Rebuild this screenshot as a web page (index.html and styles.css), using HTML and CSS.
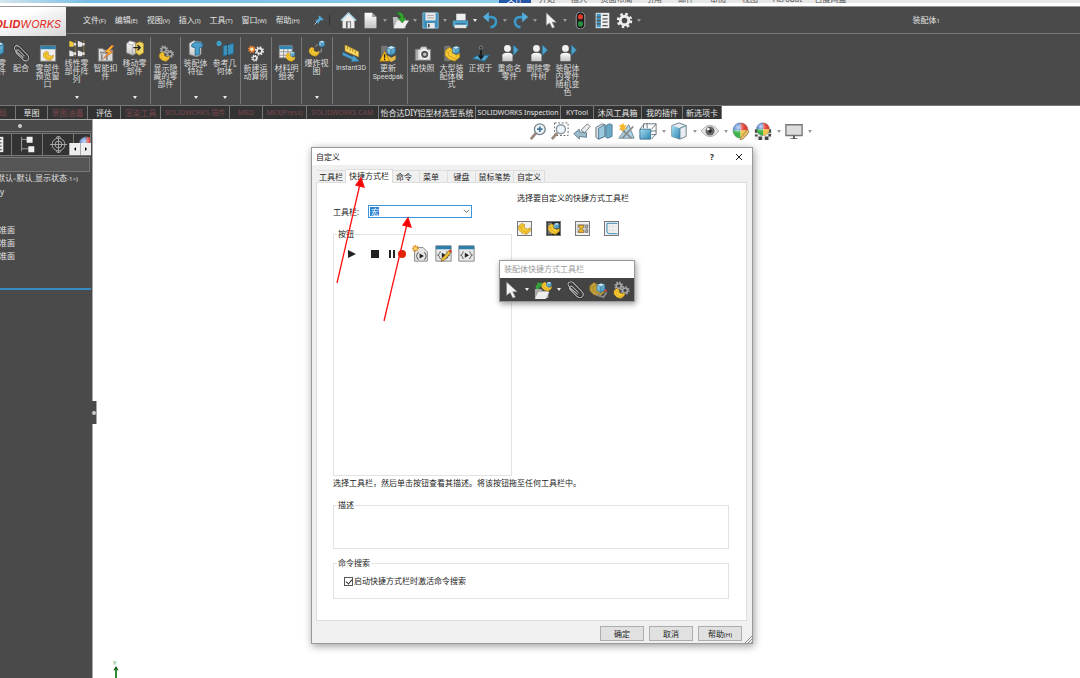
FILE: index.html
```html
<!DOCTYPE html>
<html lang="zh-CN">
<head>
<meta charset="utf-8">
<title>装配体1</title>
<link rel="stylesheet" href="styles.css">
</head>
<body>
<svg class="defs" aria-hidden="true">
  <defs>
    <linearGradient id="gBlue" x1="0" y1="0" x2="1" y2="1"><stop offset="0" stop-color="#a5dcf2"/><stop offset="1" stop-color="#2e86b4"/></linearGradient>
    <linearGradient id="gGray" x1="0" y1="0" x2="0" y2="1"><stop offset="0" stop-color="#ffffff"/><stop offset="1" stop-color="#c4c4c4"/></linearGradient>
    <radialGradient id="gShine" cx=".35" cy=".3" r=".8"><stop offset="0" stop-color="#fff" stop-opacity=".75"/><stop offset=".5" stop-color="#fff" stop-opacity="0"/></radialGradient>
  </defs>
  <symbol id="part" viewBox="0 0 20 20"><path d="M1 6l5-4 4 2v5l5 2 4-2v5l-6 5-7-2-5-5z" fill="#f8ca34" stroke="#a87c14" stroke-width=".8"/><path d="M1 6l4 2 5-4M5 8v4l8 4 6-6M13 16v3" fill="none" stroke="#c0901c" stroke-width=".8"/></symbol>
  <symbol id="cube" viewBox="0 0 20 20"><path d="M3 5l8-3 7 3v10l-8 4-7-4z" fill="url(#gBlue)" stroke="#235e80"/><path d="M3 5l8-3 7 3-8 3z" fill="#c3e9f8"/><path d="M3 5l7 3 8-3M10 8v11" fill="none" stroke="#235e80"/></symbol>
  <symbol id="clip" viewBox="0 0 20 20"><g fill="none"><path d="M13 15L4 7C0 3 4-1 8 2l9 9c5 5 0 10-5 6L5 10C2 7 5 4 8 7l6 6" stroke="#222" stroke-width="2.600"/><path d="M13 15L4 7C0 3 4-1 8 2l9 9c5 5 0 10-5 6L5 10C2 7 5 4 8 7l6 6" stroke="#b4b4b4" stroke-width="1.300"/></g></symbol>
  <symbol id="cursor" viewBox="0 0 20 20"><path d="M5 1v15l4-3 3 6 3-1-3-6h5z" fill="#f2f2f2" stroke="#777" stroke-width=".6"/></symbol>
  <symbol id="gear" viewBox="0 0 20 20"><circle cx="10" cy="10" r="7.600" fill="none" stroke="currentColor" stroke-width="3" stroke-dasharray="3 2.970"/><circle cx="10" cy="10" r="5" fill="none" stroke="currentColor" stroke-width="3.400"/></symbol>
  <symbol id="window-part" viewBox="0 0 20 20"><path d="M1 1h18v18H1z" fill="#eee" stroke="#888"/><path d="M1 1h18v4H1z" fill="#3480ab"/><use href="#part" x="4" y="6" width="13" height="13"/></symbol>
  <symbol id="pattern" viewBox="0 0 20 20"><path d="M8 0v20M18 0v20" stroke="#8b7c43"/><path d="M1 1l5 2v5H1z" fill="#f4ca39"/><path d="M11 1l5 2v5h-5zM1 12l5 2v5H1zM11 12l5 2v5h-5z" fill="#e8e8e8"/><path d="M6 5h3M16 5h3M6 16h3M16 16h3" stroke="#ddd" stroke-width="3"/></symbol>
  <symbol id="fastener" viewBox="0 0 20 20"><path d="M1 4h5l2 2h10v13H1z" fill="#d8d8d8" stroke="#777"/><path d="M3 9h13M5 11v7M11 10v8" stroke="#888" stroke-width="2"/><path d="M17 0L9 8l4 1-6 7L18 8l-4-1 5-6z" fill="#ffc338" stroke="#cf642b"/></symbol>
  <symbol id="move" viewBox="0 0 20 20"><path d="M0 4l4-3 7 2v13l-4 2-7-3z" fill="url(#gGray)" stroke="#888"/><path d="M0 4l7 2 4-3M7 6v12" fill="none" stroke="#999" stroke-width=".7"/><path d="M11 4l5-2 4 2v11l-5 3-4-3z" fill="#efd564" stroke="#aa8425"/><path d="M8 9h8m-3-3l3 3-3 3" fill="none" stroke="#222" stroke-width="1.600"/></symbol>
  <symbol id="gearsgray" viewBox="0 0 20 20"><g color="#a5a5a5"><use href="#gear" x="2" y="0" width="11" height="11"/><use href="#gear" x="9" y="5" width="11" height="11"/></g><use href="#part" x="1" y="7" width="14" height="13"/></symbol>
  <symbol id="asmfeat" viewBox="0 0 20 20"><path d="M2 4l5-3 9 1v15l-5 3-9-3z" fill="url(#gGray)" stroke="#777"/><path d="M5 5l5-3 8 2v4l-4 1v8l-5 1V9L5 8z" fill="#4b9fca" stroke="#1e678e"/></symbol>
  <symbol id="refgeo" viewBox="0 0 20 20"><circle cx="3" cy="4" r="3" fill="#3e9dc7"/><path d="M8 7l12-3v12L8 19z" fill="#3a91bc" stroke="#206a91"/><path d="M13 4v16" stroke="#333" stroke-dasharray="3 1"/></symbol>
  <symbol id="motion" viewBox="0 0 20 20"><g color="#f08331"><use href="#gear" width="10" height="10"/></g><circle cx="5" cy="5" r="2" fill="#ffe9b2"/><g color="#e8e8e8"><use href="#gear" x="8" y="1" width="12" height="12"/><use href="#gear" x="4" y="11" width="9" height="9"/></g></symbol>
  <symbol id="bom" viewBox="0 0 20 20"><path d="M1 1h15v14H1z" fill="#f1f1f1" stroke="#999"/><path d="M1 1h15v4H1z" fill="#3288b5"/><path d="M1 8h15M1 12h15M6 5v10M11 5v10" stroke="#888"/><use href="#part" x="8" y="8" width="12" height="12"/><use href="#cube" x="13" y="7" width="7" height="8"/></symbol>
  <symbol id="explode" viewBox="0 0 20 20"><use href="#part" x="0" y="7" width="13" height="13"/><use href="#cube" x="11" y="0" width="9" height="9"/><path d="M8 8l3-3M15 10v4h-3" stroke="#aaa" fill="none"/></symbol>
  <symbol id="instant" viewBox="0 0 20 20"><path d="M3 0l16 8v6L3 7z" fill="#ffdb61" stroke="#c39420" stroke-width=".7"/><path d="M6 2v3m3-1v3m3-2v3m3-1v3" stroke="#765710" stroke-width=".8"/><path d="M0 8l12 6 1-2 7 7-10 1 1-3L0 12z" fill="#4b9fc9" stroke="#28607e" stroke-width=".6"/></symbol>
  <symbol id="update" viewBox="0 0 20 20"><path d="M2 1h7v18H2z" fill="#777"/><use href="#cube" x="7" y="0" width="13" height="13"/><path d="M9 12l5 3 5-3v5l-5 3-5-3z" fill="#e5b944"/><path d="M6 7l6 12H0z" fill="#ffc21c" stroke="#8f6108" stroke-width=".6"/><path d="M6 11v4m0 1v2" stroke="#222" stroke-width="1.500"/></symbol>
  <symbol id="camera" viewBox="0 0 20 20"><path d="M1 5h5l2-3h6l1 3h4v13H1z" fill="#ddd" stroke="#777"/><path d="M3 5v12" stroke="#666"/><circle cx="12" cy="11" r="5" fill="#555" stroke="#fff" stroke-width="1.500"/><circle cx="12" cy="11" r="2" fill="#b9c4ca"/></symbol>
  <symbol id="large" viewBox="0 0 20 20"><path d="M1 1h7v18H1z" fill="#777"/><use href="#part" x="1" y="1" width="19" height="19"/><use href="#cube" x="9" y="0" width="11" height="12"/></symbol>
  <symbol id="normal" viewBox="0 0 20 20"><path d="M0 16l6-4h14l-6 7z" fill="#4fa4cf" stroke="#246788"/><path d="M10 3v12M7 12l3 4 3-4" stroke="#1b1b1b" stroke-width="2" fill="none"/><circle cx="10" cy="3" r="2" fill="#333" stroke="#aaa" stroke-width=".7"/></symbol>
  <symbol id="person" viewBox="0 0 20 20"><circle cx="7" cy="4" r="4" fill="#f1f1f1"/><path d="M1 19v-7q0-3 6-3t6 3v7z" fill="url(#gGray)"/><path d="M14 0l6 6-6 6z" fill="#4fa5d1" stroke="#2a789e" stroke-width=".7"/></symbol>
  <symbol id="home" viewBox="0 0 20 20"><path d="M1 10l9-9 9 9h-2v9H3v-9z" fill="#eee"/><path d="M1 10l9-9 9 9" fill="none" stroke="#9bcde4" stroke-width="1.500"/><path d="M7 11h6v8H7z" fill="#666"/><path d="M9 12h3v7H9z" fill="#eee"/></symbol>
  <symbol id="page" viewBox="0 0 20 20"><path d="M3 1h9l5 5v13H3z" fill="url(#gGray)"/><path d="M12 1v5h5" fill="#999"/></symbol>
  <symbol id="open" viewBox="0 0 20 20"><path d="M1 6h5l2 2h8v11H2z" fill="#bbb"/><path d="M6 10h14l-6 9H2z" fill="#eee"/><path d="M4 1c7-2 10 1 10 6h3l-5 6-5-6h3c0-3-2-5-6-6z" fill="#35a52e" stroke="#17671b" stroke-width=".5"/></symbol>
  <symbol id="save" viewBox="0 0 20 20"><path d="M1 1h18v18H1z" fill="#3d8fbd" stroke="#8cc2db"/><path d="M4 1h12v9H4zM6 13h9v6H6z" fill="#e9e9e9"/><path d="M6 4h8M6 7h8" stroke="#999"/><path d="M7 14h2v4H7z" fill="#555"/></symbol>
  <symbol id="print" viewBox="0 0 20 20"><path d="M5 2h11v8H5z" fill="#eee"/><path d="M1 10h18v7H1z" fill="#4ba1cc"/><path d="M3 15h14v4H3z" fill="#e5e5e5"/><path d="M4 14h12" stroke="#27546d"/></symbol>
  <symbol id="undo" viewBox="0 0 20 20"><path d="M5 6h6c8 0 7 11-1 12" fill="none" stroke="#3999c9" stroke-width="3"/><path d="M8 0L1 6l7 6z" fill="#55addb"/></symbol>
  <symbol id="light" viewBox="0 0 20 20"><rect x="5" y="0" width="10" height="20" rx="5" fill="#1e1e1e" stroke="#aaa"/><circle cx="10" cy="5.500" r="3" fill="#e43a2d"/><circle cx="10" cy="14" r="3" fill="#28903f"/></symbol>
  <symbol id="options" viewBox="0 0 20 20"><path d="M2 1h16v18H2z" fill="#eee"/><path d="M3 2h5v16H3z" fill="#4196c3"/><path d="M3 6h5M3 10h5M3 14h5M10 4h6M10 8h6M10 12h6M10 16h6" stroke="#555" stroke-width="1.500"/></symbol>
  <symbol id="pin" viewBox="0 0 20 20"><path d="M11 1l8 8-2 2-3-1-4 4v4l-8-8h4l4-4-1-3z" fill="#55a7d4"/><path d="M7 13l-6 6" stroke="#9fd0e8" stroke-width="2"/></symbol>
  <symbol id="zoomfit" viewBox="0 0 20 20"><path d="M8 12l-6 7" stroke="#9b877b" stroke-width="3"/><circle cx="12" cy="8" r="6" fill="#eef6fa" stroke="#77858e" stroke-width="1.500"/><path d="M9 8h6M12 5v6" fill="none" stroke="#477795" stroke-width="2"/></symbol>
  <symbol id="zoomarea" viewBox="0 0 20 20"><path d="M4 1h15v14H4z" fill="none" stroke="#555" stroke-dasharray="2 2"/><path d="M7 12l-6 7" stroke="#9b877b" stroke-width="3"/><circle cx="11" cy="8" r="5" fill="#edf5f8" stroke="#83939c" stroke-width="1.500"/></symbol>
  <symbol id="prev" viewBox="0 0 20 20"><path d="M9 9l7-7 3 3-6 7z" fill="#e6ecee" stroke="#777"/><path d="M1 13l6-5v3l8 1v5l-8-1v3z" fill="#9cbccd" stroke="#597686"/></symbol>
  <symbol id="section" viewBox="0 0 20 20"><path d="M1 6l7-4 3 1v13l-7 3-3-2z" fill="#d8dcde" stroke="#66757d"/><path d="M4 7l7-4v13l-7 3z" fill="#9cc9de" stroke="#527b92"/><path d="M12 4l4-2 3 1v13l-5 2-2-1z" fill="#6ba9c7" stroke="#527b92"/></symbol>
  <symbol id="annot" viewBox="0 0 20 20"><path d="M2 18L13 3l6 15z" fill="#a6d4e7" stroke="#718690"/><path d="M4 7l12 11M18 5L6 18" stroke="#8a8a8a" stroke-width="2"/><path d="M7 1l1 3 3-1-2 3 2 3-3-1-2 3-1-3-3 1 2-3-2-2 3-1z" fill="#f6b629"/></symbol>
  <symbol id="orient" viewBox="0 0 20 20"><path d="M5 7V2h14v12h-5M1 8l5-6M14 8l5-6M14 19l5-6M9 1v6M19 10h-6" fill="none" stroke="#5d6d77"/><path d="M1 8h12v11H1z" fill="url(#gBlue)" stroke="#3b7591"/></symbol>
  <symbol id="display" viewBox="0 0 20 20"><path d="M2 4l8-3 8 3v12l-7 3-9-3z" fill="#e7edf0" stroke="#647a85"/><path d="M2 4l9 3v12l-9-3z" fill="url(#gBlue)"/><path d="M11 7l7-3M11 7v12" stroke="#47788f"/></symbol>
  <symbol id="eye" viewBox="0 0 20 20"><path d="M0 10q10-13 20 0-10 13-20 0z" fill="#e4e4e4" stroke="#aaa"/><circle cx="10" cy="10" r="5" fill="#666"/><circle cx="10" cy="10" r="2" fill="#222"/><circle cx="8" cy="8" r="1.500" fill="#eee"/></symbol>
  <symbol id="ball" viewBox="0 0 20 20"><path d="M10 10V1A9 9 0 0 0 1 10z" fill="#3973cf"/><path d="M10 10h9a9 9 0 0 0-9-9z" fill="#df4439"/><path d="M10 10H1a9 9 0 0 0 9 9z" fill="#3eb34c"/><path d="M10 10h9a9 9 0 0 1-9 9z" fill="#f1c64d"/><circle cx="10" cy="10" r="9" fill="url(#gShine)" stroke="#777" stroke-width=".5"/></symbol>
  <symbol id="ballpen" viewBox="0 0 20 20"><use href="#ball" width="19" height="19"/><path d="M10 17l7-8 2 2-7 8-3 1z" fill="#f0c56b" stroke="#735e38" stroke-width=".7"/></symbol>
  <symbol id="scene" viewBox="0 0 20 20"><path d="M1 8h18v12H1z" fill="#eee"/><path d="M1 8h4v4H1zM15 8h4v4h-4zM5 16h4v4H5zM12 16h4v4h-4zM1 14h3v2H1zM16 13h3v3h-3z" fill="#444"/><use href="#ball" x="2" y="0" width="16" height="16"/></symbol>
  <symbol id="monitor" viewBox="0 0 20 20"><path d="M1 3h18v12H1z" fill="#ddd" stroke="#777" stroke-width="1.500"/><path d="M9 15h2v3h3v1H6v-1h3z" fill="#555"/></symbol>
  <symbol id="tree" viewBox="0 0 20 20"><path d="M3 1v17M3 4h7M3 15h9" stroke="#aaa" fill="none"/><path d="M9 1h7v7H9zM11 12h7v7h-7z" fill="#f0f0f0"/></symbol>
  <symbol id="target" viewBox="0 0 20 20"><g fill="none" stroke="#b5b5b5"><circle cx="10" cy="10" r="7.500"/><circle cx="10" cy="10" r="4"/><path d="M0 10h20M10 0v20M7 2l3-2 3 2M7 18l3 2 3-2"/></g></symbol>
  <symbol id="macro" viewBox="0 0 20 20"><path d="M1 1h18v18H1z" fill="#e8e8e8" stroke="#777"/><path d="M1 1h18v4H1z" fill="#2f7eaa"/><path d="M7 8q-2 0-2 2t-2 2q2 0 2 2t2 2M13 8q2 0 2 2t2 2q-2 0-2 2t-2 2" fill="none" stroke="#555"/><path d="M8 9l5 3-5 3z" fill="#222"/></symbol>
  <symbol id="macroedit" viewBox="0 0 20 20"><use href="#macro" width="20" height="20"/><path d="M8 16L16 7l3 2-8 9-4 1z" fill="#efbd35" stroke="#5f4b1c" stroke-width=".7"/><path d="M16 7l2-2 2 2-1 2z" fill="#d94430"/></symbol>
  <symbol id="macronew" viewBox="0 0 20 20"><path d="M3 3h10l5 5v11H3z" fill="#e6e6e6" stroke="#777"/><path d="M8 9q-2 0-2 2t-1 2q1 0 1 2t2 2M14 9q2 0 2 2t1 2q-1 0-1 2t-2 2" fill="none" stroke="#444"/><path d="M9 10l5 3-5 3z" fill="#222"/><path d="M4 0v8M0 4h8M1 1l6 6M7 1L1 7" stroke="#e6952a" stroke-width="1.500"/><circle cx="4" cy="4" r="1.500" fill="#ffe789"/></symbol>
  <symbol id="drawing" viewBox="0 0 20 20"><path d="M1 3h18v14H1z" fill="#ccc"/><path d="M3 5h10M3 15h10M15 5h3v4h-3zM15 12h3v4h-3z" fill="none" stroke="#555"/><path d="M4 5h8v3l-3 2 3 4v2H4v-2l3-4-3-2z" fill="#edb932" stroke="#80611b"/></symbol>
  <symbol id="sketch" viewBox="0 0 20 20"><path d="M7 1v18M12 1v18M1 7h18M1 13h18" stroke="#ddd"/><path d="M19 2H3v12q0 4 4 4h12" fill="none" stroke="#3689b5" stroke-width="1.500"/></symbol>
  <symbol id="openasm" viewBox="0 0 20 20"><path d="M1 9h7l2 2h6v8H1z" fill="#aaa"/><path d="M5 12h12l-4 8H1z" fill="#eee"/><path d="M2 9V5l2-1-1-2h6v5L7 6 5 9z" fill="#35a13a"/><use href="#part" x="8" y="0" width="12" height="12"/><use href="#cube" x="13" y="0" width="7" height="8"/></symbol>
  <symbol id="editasm" viewBox="0 0 20 20"><g opacity=".7"><use href="#part" x="0" y="0" width="18" height="18"/></g><use href="#cube" x="7" y="1" width="12" height="13"/><path d="M8 15l8 3 4-6" fill="none" stroke="#8a8a8a" stroke-width="2"/><path d="M16 11l3-2 1 3z" fill="#df4037"/></symbol>
</svg>

<div class="backdrop" aria-hidden="true">
  <span class="back-file">文件</span><span>开始</span><span>插入</span><span class="back-wide">页面布局</span><span>引用</span><span>邮件</span><span>审阅</span><span>视图</span><span class="back-wide">Acrobat</span><span class="back-wide">百度网盘</span>
</div>

<header class="topbar">
  <div class="logo"><span><b>SOLID</b>WORKS</span></div>
  <nav class="menus">
    <button>文件<small>(F)</small></button><button>编辑<small>(E)</small></button><button>视图<small>(V)</small></button><button>插入<small>(I)</small></button><button>工具<small>(T)</small></button><button>窗口<small>(W)</small></button><button>帮助<small>(H)</small></button>
  </nav>
  <button class="pin" aria-label="固定"><svg><use href="#pin"/></svg></button>
  <div class="quick">
    <button aria-label="主页"><svg><use href="#home"/></svg></button>
    <button class="drop" aria-label="新建"><svg><use href="#page"/></svg></button>
    <button class="drop" aria-label="打开"><svg><use href="#open"/></svg></button>
    <button class="drop" aria-label="保存"><svg><use href="#save"/></svg></button>
    <button class="drop lit" aria-label="打印"><svg><use href="#print"/></svg></button>
    <button class="drop" aria-label="撤销"><svg><use href="#undo"/></svg></button>
    <button class="drop" aria-label="重做"><svg class="flip"><use href="#undo"/></svg></button>
    <button class="drop" aria-label="选择"><svg><use href="#cursor"/></svg></button>
    <button aria-label="重建模型"><svg><use href="#light"/></svg></button>
    <button aria-label="文件属性"><svg><use href="#options"/></svg></button>
    <button class="drop" aria-label="选项"><svg class="white"><use href="#gear"/></svg></button>
  </div>
  <h1>装配体<small>1</small></h1>
</header>

<div class="ribbon">
  <div class="group loose">
    <button class="tool cut" aria-label="插入零部件"><svg><use href="#cube"/></svg><span>零件</span></button>
    <button class="tool slim"><svg><use href="#clip"/></svg><span>配合</span></button>
    <button class="tool"><svg><use href="#window-part"/></svg><span>零部件预览窗口</span></button>
    <button class="tool menu"><svg><use href="#pattern"/></svg><span>线性零部件阵列</span></button>
    <button class="tool"><svg><use href="#fastener"/></svg><span>智能扣件</span></button>
    <button class="tool menu"><svg><use href="#move"/></svg><span>移动零部件</span></button>
  </div>
  <div class="group"><button class="tool"><svg><use href="#gearsgray"/></svg><span>显示隐藏的零部件</span></button></div>
  <div class="group loose">
    <button class="tool menu"><svg><use href="#asmfeat"/></svg><span>装配体特征</span></button>
    <button class="tool menu"><svg><use href="#refgeo"/></svg><span>参考几何体</span></button>
  </div>
  <div class="group loose"><button class="tool"><svg><use href="#motion"/></svg><span>新建运动算例</span></button></div>
  <div class="group"><button class="tool"><svg><use href="#bom"/></svg><span>材料明细表</span></button></div>
  <div class="group loose"><button class="tool menu"><svg><use href="#explode"/></svg><span>爆炸视图</span></button></div>
  <div class="group"><button class="tool wide"><svg><use href="#instant"/></svg><span class="latin">Instant3D</span></button></div>
  <div class="group loose"><button class="tool wide"><svg><use href="#update"/></svg><span>更新 <span class="latin">Speedpak</span></span></button></div>
  <div class="group last">
    <button class="tool"><svg><use href="#camera"/></svg><span>拍快照</span></button>
    <button class="tool"><svg><use href="#large"/></svg><span>大型装配体模式</span></button>
    <button class="tool"><svg><use href="#normal"/></svg><span>正视于</span></button>
    <button class="tool"><svg><use href="#person"/></svg><span>重命名零件</span></button>
    <button class="tool"><svg><use href="#person"/></svg><span>删除零件树</span></button>
    <button class="tool"><svg><use href="#person"/></svg><span>装配体内零件随机变色</span></button>
  </div>
</div>

<div class="workspace">
  <nav class="cmdtabs">
    <button class="off clipped">布局</button><button>草图</button><button class="off">草图油墨</button><button>评估</button><button class="off">渲染工具</button><button class="off en">SOLIDWORKS 插件</button><button class="off en">MBD</button><button class="off en">MEX(Press)</button><button class="off en">SOLIDWORKS CAM</button><button>怡合达DIY铝型材选型系统</button><button class="en">SOLIDWORKS Inspection</button><button class="en">KYTool</button><button>沐风工具箱</button><button>我的插件</button><button>新选项卡</button>
  </nav>
  <div class="panes">
    <aside class="side">
      <div class="grip"><i></i></div>
      <div class="sidetabs">
        <button class="st-a" aria-label="特征树"><svg><use href="#options"/></svg></button>
        <button class="st-b" aria-label="配置"><svg><use href="#tree"/></svg></button>
        <button class="st-b" aria-label="尺寸"><svg><use href="#target"/></svg></button>
        <button class="st-c" aria-label="外观"><svg><use href="#ball"/></svg></button>
        <div class="scroll"><button aria-label="向左"><svg viewBox="0 0 4 4"><path d="M3 0v4L1 2z"/></svg></button><button aria-label="向右"><svg viewBox="0 0 4 4"><path d="M1 0v4l2-2z"/></svg></button></div>
      </div>
      <input class="filter" aria-label="过滤">
      <div class="treehead">默认<small>&lt;</small>默认<small>_</small>显示状态<small>-1&gt;)</small></div>
      <ul class="treelist">
        <li class="hist">y</li><li class="plane">准面</li><li class="plane">准面</li><li class="plane">准面</li>
      </ul>
      <div class="rollback"></div>
      <button class="collapse" aria-label="折叠"><i></i></button>
    </aside>
    <main class="view">
      <div class="heads">
        <button aria-label="整屏显示"><svg><use href="#zoomfit"/></svg></button>
        <button aria-label="局部放大"><svg><use href="#zoomarea"/></svg></button>
        <button aria-label="上一视图"><svg><use href="#prev"/></svg></button>
        <button aria-label="剖面视图"><svg><use href="#section"/></svg></button>
        <button aria-label="动态注解"><svg><use href="#annot"/></svg></button>
        <button class="drop" aria-label="视图定向"><svg><use href="#orient"/></svg></button>
        <button class="drop" aria-label="显示样式"><svg><use href="#display"/></svg></button>
        <button class="drop" aria-label="隐藏/显示"><svg><use href="#eye"/></svg></button>
        <button aria-label="编辑外观"><svg><use href="#ballpen"/></svg></button>
        <button class="drop" aria-label="应用布景"><svg><use href="#scene"/></svg></button>
        <button class="drop" aria-label="视图设定"><svg><use href="#monitor"/></svg></button>
      </div>
      <div class="triad"><span>Y</span><svg viewBox="0 0 6 14"><path d="M3 0l3 5H0z" fill="#17641b"/><path d="M3 4v10" stroke="#2e8b36" stroke-width="2.400"/></svg></div>
    </main>
  </div>
</div>

<section class="dialog" role="dialog" aria-label="自定义">
  <div class="titlebar"><h2>自定义</h2><button aria-label="帮助">?</button><button aria-label="关闭"><svg viewBox="0 0 8 8"><path d="M1 1l6 6M7 1L1 7" stroke="#222"/></svg></button></div>
  <div class="tabs" role="tablist">
    <button role="tab">工具栏</button><button role="tab" aria-selected="true">快捷方式栏</button><button role="tab" class="lead">命令</button><button role="tab" class="lead">菜单</button><button role="tab">键盘</button><button role="tab">鼠标笔势</button><button role="tab">自定义</button>
  </div>
  <div class="panel">
    <div class="columns">
      <div class="left">
        <div class="field">
          <label for="bar">工具栏:</label>
          <div class="combo"><select id="bar"><option>宏</option></select><svg viewBox="0 0 8 8"><path d="M1 2l3 3 3-3" fill="none" stroke="#555"/></svg></div>
        </div>
        <fieldset class="buttons">
          <legend>按钮</legend>
          <div class="macros">
            <button class="sm" aria-label="播放"><svg viewBox="0 0 10 10"><path d="M1 1l8 4-8 4z" fill="#222"/></svg></button>
            <button class="sm" aria-label="停止"><svg viewBox="0 0 10 10"><path d="M1 1h8v8H1z" fill="#222"/></svg></button>
            <button class="rec" aria-label="录制/暂停"><svg viewBox="0 0 18 10"><path d="M1 1h2v8H1zM5 1h2v8H5z" fill="#222"/><circle cx="14" cy="5" r="4" fill="#df2505"/></svg></button>
            <button aria-label="新建宏"><svg><use href="#macronew"/></svg></button>
            <button aria-label="编辑宏"><svg><use href="#macroedit"/></svg></button>
            <button aria-label="宏"><svg><use href="#macro"/></svg></button>
          </div>
        </fieldset>
      </div>
      <div class="right">
        <p>选择要自定义的快捷方式工具栏</p>
        <div class="modes">
          <button aria-label="零件"><svg><use href="#part"/></svg></button>
          <button class="on" aria-label="装配体"><svg><use href="#large"/></svg></button>
          <button aria-label="工程图"><svg><use href="#drawing"/></svg></button>
          <button aria-label="草图"><svg><use href="#sketch"/></svg></button>
        </div>
      </div>
    </div>
    <p class="hint">选择工具栏，然后单击按钮查看其描述。将该按钮拖至任何工具栏中。</p>
    <fieldset class="desc"><legend>描述</legend></fieldset>
    <fieldset class="search"><legend>命令搜索</legend><label><input type="checkbox" checked>启动快捷方式栏时激活命令搜索</label></fieldset>
  </div>
  <div class="actions"><button>确定</button><button>取消</button><button>帮助<small>(H)</small></button></div>
  <svg class="resize" viewBox="0 0 7 7"><path d="M0 7l7-7M3 7l4-4M6 7l1-1" stroke="#888"/></svg>
</section>

<section class="palette" aria-label="装配体快捷方式工具栏">
  <h3>装配体快捷方式工具栏</h3>
  <div class="palette-row">
    <button class="drop" aria-label="选择"><svg><use href="#cursor"/></svg></button>
    <button class="drop" aria-label="打开"><svg><use href="#openasm"/></svg></button>
    <button aria-label="配合"><svg><use href="#clip"/></svg></button>
    <button aria-label="编辑"><svg><use href="#editasm"/></svg></button>
    <button aria-label="显示隐藏"><svg><use href="#gearsgray"/></svg></button>
  </div>
</section>

<svg class="marks" viewBox="0 0 76 146" aria-hidden="true">
  <g stroke="#ff1010" stroke-width="1.300" fill="#f40000"><path d="M2 105L25 6"/><path d="M26 0l3 9-8-2z"/><path d="M49 143L72 46"/><path d="M73 40l3 9-8-2z"/></g>
</svg>
</body>
</html>
```
FILE: styles.css
```css
* { box-sizing: border-box; }
body {
  margin: 0;
  min-height: 100vh;
  display: flex;
  flex-direction: column;
  position: relative;
  overflow: hidden;
  background: #fff;
  color: #222;
  font: 8px/10px "Noto Sans", "Noto Sans CJK SC", sans-serif;
}
.defs { position: absolute; width: 0; height: 0; }
button { border: 0; padding: 0; margin: 0; background: none; color: inherit; font: inherit; flex: none; }
small { font-size: 6px; }
h1, h2, h3, p, ul { margin: 0; padding: 0; font: inherit; list-style: none; }
svg { display: block; overflow: visible; flex: none; }

.backdrop {
  display: flex;
  align-items: flex-end;
  height: 3px;
  overflow: hidden;
  padding-left: 499px;
  background: linear-gradient(90deg, #d5e5ed 0, #76bde6 90px, #8ccbea 499px, #e8e8e8 499px);
  color: #555;
  line-height: 9px;
}
.backdrop span { width: 32px; flex: none; text-align: center; }
.backdrop .back-file { background: #2456a8; color: #fff; }
.backdrop .back-wide { width: 43px; }

.topbar {
  display: flex;
  align-items: center;
  height: 28px;
  margin-top: 3px;
  background: #4a4a4a;
  border-top: 1px solid #999;
  border-bottom: 1px solid #777;
  color: #e4e4e4;
}
.logo {
  align-self: flex-start;
  width: 66px;
  height: 29px;
  display: flex;
  flex: none;
  align-items: center;
  justify-content: flex-end;
  overflow: hidden;
  padding: 4px 5px 0 0;
  background: linear-gradient(160deg, #fff 30%, #d5d5d5);
  color: #e03028;
  font: italic 11px/20px Inter, sans-serif;
  position: relative;
  z-index: 1;
}
.menus { display: flex; gap: 9px; margin-left: 17px; }
.menus button { white-space: nowrap; }
.pin { margin-left: 14px; padding-right: 5px; border-right: 1px solid #333; }
.pin svg { width: 10px; height: 10px; }
.quick { display: flex; align-items: center; margin-left: 10px; gap: 5px; }
.quick svg { width: 17px; height: 17px; }
.white { color: #eee; }
.flip { transform: scaleX(-1); }
.drop { display: flex; align-items: center; gap: 5px; }
.drop::after { content: ""; border: 2px solid transparent; border-top: 3px solid #999; border-bottom: 0; }
.drop.lit::after { border-top-color: #eee; }
.quick .drop { gap: 4px; }
.topbar h1 { margin-left: auto; padding-right: 140px; }

.ribbon { display: flex; height: 72px; padding: 3px 0 1px; background: #4a4a4a; color: #dcdcdc; border-bottom: 1px solid #777; }
.group { display: flex; flex: none; border-right: 1px solid #777; }
.loose { padding-right: 1px; }
.last { border: 0; }
.tool { width: 29px; display: flex; flex-direction: column; align-items: center; gap: 2px; padding-top: 8px; line-height: 8px; position: relative; }
.tool svg { width: 18px; height: 17px; }
.tool.menu { padding-top: 3px; }
.tool.menu::after { content: ""; position: absolute; bottom: 5px; border: 2px solid transparent; border-top: 3px solid #eee; border-bottom: 0; }
.slim { width: 24px; }
.wide { width: 36px; }
.cut { width: 9px; overflow: hidden; align-items: flex-end; padding: 3px 3px 0 0; }
.cut span { width: 8px; }
.latin { font: 7px/8px Roboto, sans-serif; }

.workspace { flex: 1; display: flex; flex-direction: column; }
.cmdtabs {
  display: grid;
  grid-template-columns: 16px 32px 40px 33px 40px 69px 33px 44px 72px 97px 85px 33px 48px 41px 39px;
  width: max-content;
  height: 13px;
  color: #e5e5e5;
  background: #333;
}
.cmdtabs button { border-right: 1px solid #777; white-space: nowrap; line-height: 12px; }
.cmdtabs .en { font-size: 7px; }
.cmdtabs .off { color: #7a474e; }
.cmdtabs .clipped { overflow: hidden; direction: rtl; padding-right: 8px; }

.panes { flex: 1; display: flex; }
.side { width: 93px; flex: none; background: #4a4a4a; color: #e4e4e4; border-right: 1px solid #aaa; border-top: 1px solid #aaa; position: relative; }
.grip { height: 12px; display: flex; align-items: center; padding-left: 18px; border-bottom: 1px solid #777; }
.grip i, .collapse i { width: 4px; height: 4px; border-radius: 2px; background: #ccc; }
.sidetabs { display: flex; margin-top: 1px; height: 23px; background: #333; border-top: 1px solid #777; border-bottom: 1px solid #777; position: relative; overflow: hidden; margin-right: 1px; }
.sidetabs > button { display: flex; align-items: center; justify-content: center; border-right: 1px solid #777; overflow: hidden; }
.sidetabs svg { width: 17px; height: 17px; }
.st-a { width: 12px; }
.sidetabs .st-a { justify-content: flex-end; padding-right: 6px; }
.st-b { width: 31px; }
.st-c { width: 17px; padding-left: 8px; }
.scroll { position: absolute; right: 0; bottom: 0; display: flex; background: #eee; color: #111; }
.scroll button { width: 11px; height: 12px; border-left: 1px solid #aaa; display: grid; place-items: center; }
.scroll svg { width: 4px; height: 4px; }
.filter { display: block; width: 90px; height: 15px; margin-top: 1px; background: #555; border: 1px solid #777; border-left: 0; color: #eee; font: inherit; }
.treehead { margin: 1px 0 0 -3px; white-space: nowrap; height: 12px; }
.treelist { line-height: 13px; }
.plane { margin-left: -1px; }
.hist { margin-bottom: 25px; }
.rollback { height: 2px; margin: 26px 1px 0 0; background: #368bc4; }
.collapse { position: absolute; right: -5px; top: 281px; width: 5px; height: 23px; background: #4a4a4a; display: flex; align-items: center; border-right: 1px solid #aaa; }

.view { flex: 1; display: flex; flex-direction: column; justify-content: space-between; padding: 3px 0 0 20px; }
.heads { display: flex; gap: 4px; padding-left: 416px; }
.heads svg { width: 18px; height: 18px; }
.triad { width: 6px; color: #35a13a; font-size: 6px; line-height: 6px; }
.triad svg { width: 6px; height: 12px; }

.dialog {
  position: absolute;
  left: 311px;
  top: 147px;
  width: 442px;
  display: flex;
  flex-direction: column;
  background: #f0f0f0;
  border: 1px solid #999;
  box-shadow: 1px 2px 8px rgba(0,0,0,.4);
}
.titlebar { display: flex; align-items: center; height: 17px; background: #fff; padding: 0 7px 0 4px; }
.titlebar h2 { margin-right: auto; }
.titlebar button { width: 12px; display: flex; justify-content: center; margin-left: 15px; font-weight: bold; }
.titlebar svg { width: 8px; height: 8px; }
.tabs { display: grid; grid-template-columns: 29px 47px 27px 28px 28px 38px 31px; align-items: end; padding: 4px 0 0 5px; }
.tabs button { height: 12px; border: 1px solid #ddd; border-left: 0; border-bottom: 0; white-space: nowrap; }
.tabs .lead { text-align: left; padding-left: 3px; }
.tabs [aria-selected] { height: 14px; background: #fff; margin-bottom: -1px; padding-bottom: 2px; position: relative; }
.panel { margin: 0 5px 0 4px; padding: 9px 17px 21px 16px; background: #fff; border: 1px solid #ddd; }
.columns { display: flex; gap: 5px; }
.left { width: 179px; }
.field { display: flex; align-items: center; gap: 7px; margin-top: 13px; }
.field label { width: 28px; white-space: nowrap; }
.combo { position: relative; width: 104px; }
.combo select {
  appearance: none;
  display: block;
  width: 100%;
  height: 13px;
  padding: 0 2px;
  border: 1px solid #3b95d8;
  border-radius: 0;
  background: linear-gradient(#2b83d3, #2b83d3) 1px 1px / 9px 9px no-repeat #fff;
  color: #fff;
  font: inherit;
}
.combo svg { position: absolute; right: 2px; top: 3px; width: 7px; height: 7px; pointer-events: none; }
fieldset { margin: 0; padding: 0; border: 1px solid #e2e2e2; min-width: 0; }
legend { margin-left: 3px; padding: 0 1px; line-height: 10px; }
.buttons { height: 247px; margin-top: 11px; }
.macros { display: flex; align-items: center; padding: 6px 0 0 13px; }
.macros svg { width: 17px; height: 17px; }
.macros button { margin-right: 6px; }
.macros .sm svg { width: 10px; height: 10px; }
.macros .sm { margin-right: 13px; }
.macros .rec svg { width: 18px; height: 10px; }
.macros .sm + .rec { margin-left: -5px; }
.right { padding-top: 1px; white-space: nowrap; }
.modes { display: flex; gap: 14px; margin-top: 18px; }
.modes button { width: 15px; height: 15px; border: 1px solid #777; background: #f2f2f2; }
.modes svg { width: 13px; height: 13px; }
.modes .on { background: #222; }
.hint { margin-top: 2px; white-space: nowrap; }
.desc { height: 49px; margin-top: 12px; }
.search { height: 41px; margin-top: 9px; }
.search label { display: flex; align-items: center; gap: 1px; padding: 8px 0 0 10px; }
.search input { appearance: none; width: 9px; height: 9px; margin: 0; border: 1px solid #555; display: grid; place-items: center; }
.search input:checked::after { content: ""; width: 3px; height: 5px; border: solid #333; border-width: 0 1px 1px 0; transform: rotate(40deg); }
.actions { display: flex; justify-content: flex-end; gap: 5px; padding: 5px 10px 2px; }
.actions button { width: 44px; height: 15px; background: #e1e1e1; border: 1px solid #adadad; line-height: 13px; }
.resize { position: absolute; right: 0; bottom: 0; width: 7px; height: 7px; }

.palette { position: absolute; left: 499px; top: 260px; width: 136px; background: #fff; border: 1px solid #999; box-shadow: 1px 2px 6px rgba(0,0,0,.4); }
.palette h3 { padding: 3px 4px 4px; color: #999; white-space: nowrap; }
.palette-row { display: flex; align-items: center; gap: 5px; height: 23px; padding: 0 2px; background: #444; }
.palette-row svg { width: 18px; height: 18px; }
.palette-row .drop::after { border-top-color: #eee; }
.marks { position: absolute; left: 335px; top: 178px; width: 76px; height: 146px; pointer-events: none; }
```
